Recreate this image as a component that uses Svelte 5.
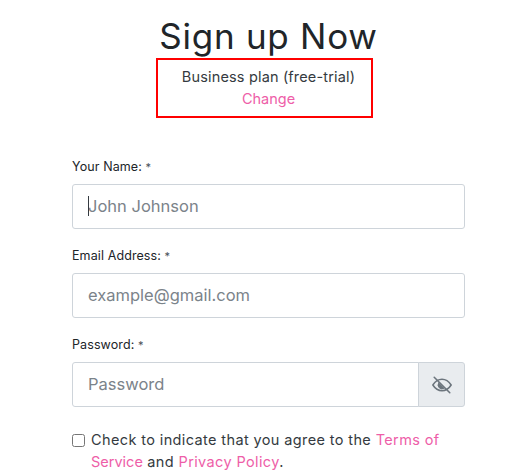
<script lang="ts">
  let agreed = $state(false);
</script>

<main class="page">
  <header class="head">
    <h1>Sign up Now</h1>
    <div class="plan-box">
      <p>Business plan (free-trial)</p>
      <a href="#change">Change</a>
    </div>
  </header>

  <form class="form">
    <div class="field">
      <label for="name">Your Name: <span class="req">*</span></label>
      <div class="caret-wrap">
        <input id="name" type="text" placeholder="John Johnson" />
        <span class="caret"></span>
      </div>
    </div>
    <div class="field">
      <label for="email">Email Address: <span class="req">*</span></label>
      <input id="email" type="email" placeholder="example@gmail.com" />
    </div>
    <div class="field last">
      <label for="password">Password: <span class="req">*</span></label>
      <div class="input-group">
        <input id="password" type="password" placeholder="Password" />
        <button type="button" class="eye-btn" aria-label="Show password">
          <svg viewBox="0 0 24 24" width="22" height="22" fill="none" stroke="#6c757d" stroke-width="1.700" stroke-linecap="round" stroke-linejoin="round">
            <path d="M2 12c2.600-4 6-6.200 10-6.200S19.400 8 22 12c-2.600 4-6 6.200-10 6.200S4.600 16 2 12z" />
            <path d="M8.500 9.500a4.300 4.300 0 0 0 6 6z" fill="#6c757d" stroke-width="1" />
            <path d="M3.500 3.500l17 17" />
          </svg>
        </button>
      </div>
    </div>
    <label class="agree">
      <input type="checkbox" bind:checked={agreed} />
      <span>Check to indicate that you agree to the <a href="#terms">Terms of <span class="tight">Service</span></a> and <a href="#privacy">Privacy Policy</a>.</span>
    </label>
  </form>
</main>

<style>
  :global(body) {
    margin: 0;
    background: #fff;
    overflow: hidden;
  }

  .page {
    box-sizing: border-box;
    width: 512px;
    height: 472px;
    overflow: hidden;
    padding: 0 47px 0 72px;
    font-family: "Inter", "Noto Sans", sans-serif;
    color: #212529;
  }

  /* ---- heading ---- */
  .head {
    display: flex;
    flex-direction: column;
    align-items: center;
  }

  h1 {
    margin: 15px 0 0;
    font-size: 35px;
    line-height: 43px;
    font-weight: 400;
    letter-spacing: 0.75px;
    white-space: nowrap;
  }

  .plan-box {
    box-sizing: border-box;
    width: 217px;
    height: 60px;
    margin-right: 8px;
    border: 2px solid #f00;
    text-align: center;
    font-size: 14.500px;
    line-height: 22px;
    padding: 6px 0 0 8px;
  }

  .plan-box p {
    margin: 0;
    color: #343a40;
    letter-spacing: 0.16px;
    white-space: nowrap;
  }

  a {
    color: #ee5ea8;
    text-decoration: none;
  }

  /* ---- form ---- */
  .form {
    margin-top: 40px;
  }

  .field {
    margin-bottom: 18px;
  }

  .field.last {
    margin-bottom: 22px;
  }

  .field label {
    display: block;
    font-size: 12.500px;
    line-height: 18px;
    margin-bottom: 8px;
    letter-spacing: 0.1px;
    color: #212529;
  }

  .req {
    font-size: 11px;
    color: #495057;
  }

  .caret-wrap {
    position: relative;
  }

  .caret {
    position: absolute;
    left: 16px;
    top: 12px;
    width: 1px;
    height: 20px;
    background: #343a40;
  }

  input[type="text"],
  input[type="email"],
  input[type="password"] {
    box-sizing: border-box;
    display: block;
    width: 100%;
    height: 45px;
    padding: 0 15px 2px;
    border: 1px solid #ced4da;
    border-radius: 3px;
    background: #fff;
    font-family: inherit;
    font-size: 16.500px;
    color: #495057;
    outline: none;
  }

  input::placeholder {
    color: #7b838a;
    opacity: 1;
  }

  .input-group {
    display: flex;
  }

  .input-group input[type="password"] {
    flex: 1;
    width: auto;
    min-width: 0;
    border-radius: 3px 0 0 3px;
  }

  .eye-btn {
    box-sizing: border-box;
    width: 47px;
    height: 45px;
    margin-left: -1px;
    padding: 0;
    border: 1px solid #ced4da;
    border-radius: 0 3px 3px 0;
    background: #e9ecef;
    display: grid;
    place-items: center;
  }

  /* ---- agree ---- */
  .agree {
    display: flex;
    align-items: flex-start;
    gap: 6px;
    font-size: 14.500px;
    line-height: 22px;
    letter-spacing: 0.38px;
    color: #343a40;
  }

  .agree input {
    width: 13px;
    height: 13px;
    margin: 5px 0 0;
    flex: none;
  }

  .tight {
    letter-spacing: 0;
  }
</style>
